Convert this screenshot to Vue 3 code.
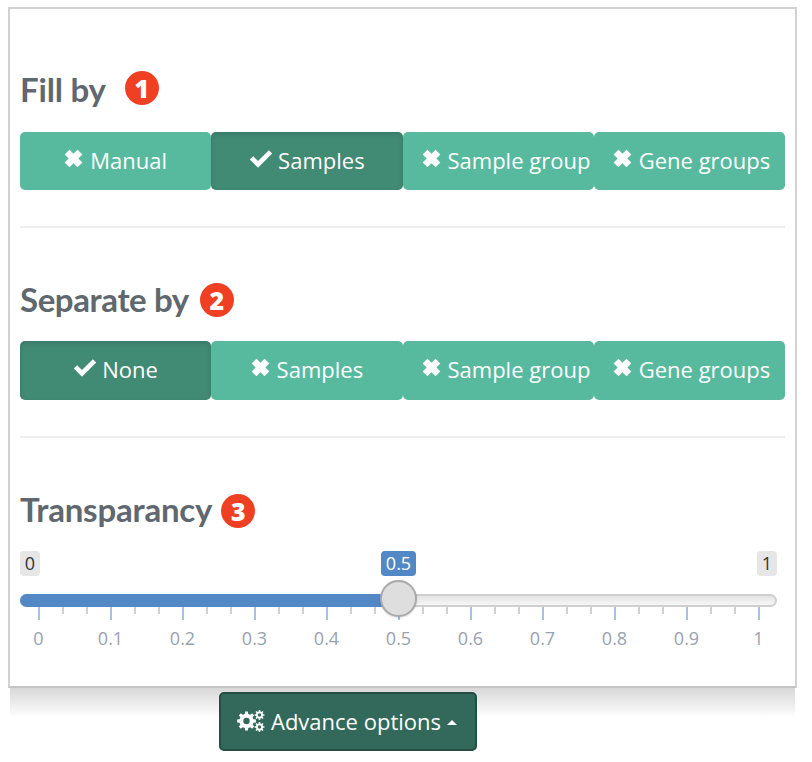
<template>
  <div class="page">
    <div class="panel">
      <section v-for="(group, i) in groups" :key="group.title" class="group">
        <h3 class="heading" :class="group.cls">
          {{ group.title }}
          <span class="step">{{ i + 1 }}</span>
        </h3>
        <div class="btn-row">
          <button
            v-for="opt in options(group)"
            :key="opt"
            class="opt"
            :class="{ active: opt === group.selected, wide: opt.length > 10 }"
          >
            <svg v-if="opt === group.selected" class="mark check" viewBox="0 0 24 20">
              <path d="M0.8 10.6 L4.2 7.2 L9 12 L19.8 1.2 L23.2 4.6 L9 18.8 Z" fill="#fff" />
            </svg>
            <svg v-else class="mark cross" viewBox="0 0 18 18">
              <path d="M5.2 0.6 L9 4.4 L12.8 0.6 L17.4 5.2 L13.6 9 L17.4 12.8 L12.8 17.4 L9 13.6 L5.2 17.4 L0.6 12.8 L4.4 9 L0.6 5.2 Z" fill="#fff" />
            </svg>
            {{ opt }}
          </button>
        </div>
        <hr class="rule" />
      </section>

      <section class="group slider-group">
        <h3 class="heading third">Transparancy <span class="step">3</span></h3>
        <div class="slider">
          <span class="edge edge-min">0</span>
          <span class="edge edge-max">1</span>
          <span class="current">0.5</span>
          <div class="track"><div class="bar"></div></div>
          <span
            v-for="t in ticks"
            :key="t.x"
            class="tick"
            :class="{ major: t.major }"
            :style="{ left: t.x + 'px' }"
          ></span>
          <span
            v-for="l in tickLabels"
            :key="l.text"
            class="tick-label"
            :style="{ left: l.x + 'px' }"
          >{{ l.text }}</span>
          <div class="handle"></div>
        </div>
      </section>
    </div>

    <div class="footer">
      <button class="advance">
        <svg class="cogs" viewBox="0 0 28 22">
          <path :d="bigGear" fill="#fff" fill-rule="evenodd" />
          <path :d="topGear" fill="#fff" fill-rule="evenodd" />
          <path :d="lowGear" fill="#fff" fill-rule="evenodd" />
        </svg>
        Advance options
        <span class="caret"></span>
      </button>
    </div>
  </div>
</template>

<script setup>
const groups = [
  { title: 'Fill by', first: 'Manual', selected: 'Samples', cls: 'first' },
  { title: 'Separate by', first: 'None', selected: 'None', cls: 'second' },
]

const options = (group) => [
  group.first,
  'Samples',
  'Sample group',
  'Gene groups',
]

// ticks sit every 24px, every third one is a major tick
const ticks = []
for (let i = 0; i <= 30; i++) {
  ticks.push({ x: 17.5 + i * 24, major: i % 3 === 0 })
}

const tickLabels = []
for (let i = 0; i <= 10; i++) {
  tickLabels.push({ x: 18 + i * 72, text: i === 0 ? '0' : i === 10 ? '1' : (i / 10).toFixed(1) })
}

// builds a toothed wheel with a round hole in it
function gear(cx, cy, outer, inner, hole, teeth) {
  const pts = []
  const step = (Math.PI * 2) / teeth
  for (let i = 0; i < teeth; i++) {
    const a = i * step - Math.PI / 2
    const w = step * 0.2
    const s = step * 0.3
    pts.push([a - s, inner], [a - w, outer], [a + w, outer], [a + s, inner])
  }
  const d = pts
    .map(([a, r], i) => `${i ? 'L' : 'M'}${(cx + r * Math.cos(a)).toFixed(2)} ${(cy + r * Math.sin(a)).toFixed(2)}`)
    .join(' ')
  return `${d} Z M${cx - hole} ${cy} a${hole} ${hole} 0 1 0 ${hole * 2} 0 a${hole} ${hole} 0 1 0 ${-hole * 2} 0 Z`
}

const bigGear = gear(9.5, 11, 9.5, 7.2, 3.2, 8)
const topGear = gear(22.5, 5, 5, 3.6, 1.7, 8)
const lowGear = gear(22.5, 17, 5, 3.6, 1.7, 8)
</script>

<style>
html,
body {
  margin: 0;
  background: #fff;
}
</style>

<style scoped>
.page {
  width: 812px;
  height: 762px;
  overflow: hidden;
  font-family: "Open Sans", "Liberation Sans", sans-serif;
  padding: 7px 0 0 8px;
  box-sizing: border-box;
}

.panel {
  width: 789px;
  height: 681px;
  box-sizing: border-box;
  border: 2px solid #d2d2d2;
  border-bottom-color: #c4c4c4;
  padding: 0 10px;
  background: #fff;
}

.heading {
  margin: 0;
  font-family: Lato, "Liberation Sans", sans-serif;
  font-weight: 700;
  font-size: 33px;
  line-height: 38px;
  color: #5f686e;
  display: flex;
  align-items: center;
  letter-spacing: -0.2px;
}

.heading.first {
  padding-top: 61px;
  margin-bottom: 24px;
}

.heading.second {
  padding-top: 52px;
  margin-bottom: 23px;
  letter-spacing: -0.4px;
}

.heading.third {
  padding-top: 52px;
}

.step {
  width: 34px;
  height: 34px;
  border-radius: 50%;
  background: #ef4023;
  color: #fff;
  font-family: "Open Sans", sans-serif;
  font-weight: 800;
  font-size: 25px;
  line-height: 34px;
  text-align: center;
  letter-spacing: 0;
  margin-top: 2px;
  margin-left: 11px;
}

.heading.first .step {
  margin-left: 19px;
  margin-top: -3px;
}

.heading.third .step {
  margin-left: 9px;
  margin-top: 4px;
}

.btn-row {
  display: grid;
  grid-template-columns: repeat(4, 1fr);
  width: 765px;
}

.opt {
  height: 58px;
  border: 0;
  border-radius: 5px;
  background: #57ba9e;
  color: #fff;
  font-family: inherit;
  font-size: 22px;
  padding: 0 0 2px;
  display: flex;
  align-items: center;
  justify-content: center;
  gap: 7px;
  white-space: nowrap;
}

.opt.wide {
  justify-content: flex-start;
  padding-left: 19px;
}

.opt.active {
  background: #418a74;
  box-shadow: inset 0 2px 5px rgba(0, 0, 0, 0.13);
}

.group:nth-child(2) .opt {
  height: 59px;
  padding-bottom: 3px;
}

.mark {
  flex: none;
  margin-top: -3px;
}

.cross {
  width: 19px;
  height: 19px;
}

.check {
  width: 24px;
  height: 20px;
  margin-right: -2px;
}

.rule {
  border: 0;
  border-top: 2px solid #eeeeee;
  margin: 36px 0 0;
  width: 765px;
}

.slider {
  position: relative;
  height: 124px;
  width: 757px;
  margin-top: 23px;
}

.edge,
.current {
  position: absolute;
  top: 0;
  height: 25px;
  line-height: 25px;
  font-size: 18px;
  border-radius: 4px;
  text-align: center;
}

.edge {
  background: #e6e6e6;
  color: #333;
  width: 20px;
}

.edge-min {
  left: 0;
}

.edge-max {
  right: 0;
}

.current {
  left: 361px;
  width: 35px;
  background: #5288c6;
  color: #fff;
}

.track {
  position: absolute;
  left: 0;
  right: 0;
  top: 43px;
  height: 13px;
  border-radius: 7px;
  box-sizing: border-box;
  border: 2px solid #cfcfcf;
  background: linear-gradient(#e4e4e4, #f6f6f6);
}

.bar {
  position: absolute;
  left: -2px;
  top: -2px;
  height: 13px;
  width: 378px;
  background: #5288c6;
  border-radius: 7px 0 0 7px;
}

.tick {
  position: absolute;
  top: 56px;
  width: 2px;
  height: 7px;
  background: #d0d0d0;
}

.tick.major {
  height: 13px;
  background: #a5c3e2;
}

.tick-label {
  position: absolute;
  top: 75px;
  transform: translateX(-50%);
  font-size: 18px;
  line-height: 24px;
  color: #97a3ae;
  margin-left: 0.5px;
}

.handle {
  position: absolute;
  left: 360px;
  top: 29px;
  width: 37px;
  height: 37px;
  box-sizing: border-box;
  border-radius: 50%;
  border: 2px solid #aaa;
  background: #dedede;
  box-shadow: 0 1px 2px rgba(0, 0, 0, 0.15);
}

.footer {
  width: 785px;
  margin-left: 2px;
  height: 70px;
  padding: 4px 0 0 209px;
  box-sizing: border-box;
  background: linear-gradient(#d8d8d8, #ffffff) no-repeat 0 0 / 100% 30px;
}

.advance {
  width: 258px;
  height: 59px;
  box-sizing: border-box;
  border: 2px solid #234e41;
  border-radius: 5px;
  background: #33695a;
  color: #fff;
  font-family: inherit;
  font-size: 22px;
  padding: 0 2px 2px 0;
  display: flex;
  align-items: center;
  justify-content: center;
  gap: 6px;
  white-space: nowrap;
}

.cogs {
  width: 28px;
  height: 22px;
  flex: none;
}

.caret {
  width: 0;
  height: 0;
  border-left: 5px solid transparent;
  border-right: 5px solid transparent;
  border-bottom: 5px solid #fff;
  margin-top: 3px;
}
</style>
